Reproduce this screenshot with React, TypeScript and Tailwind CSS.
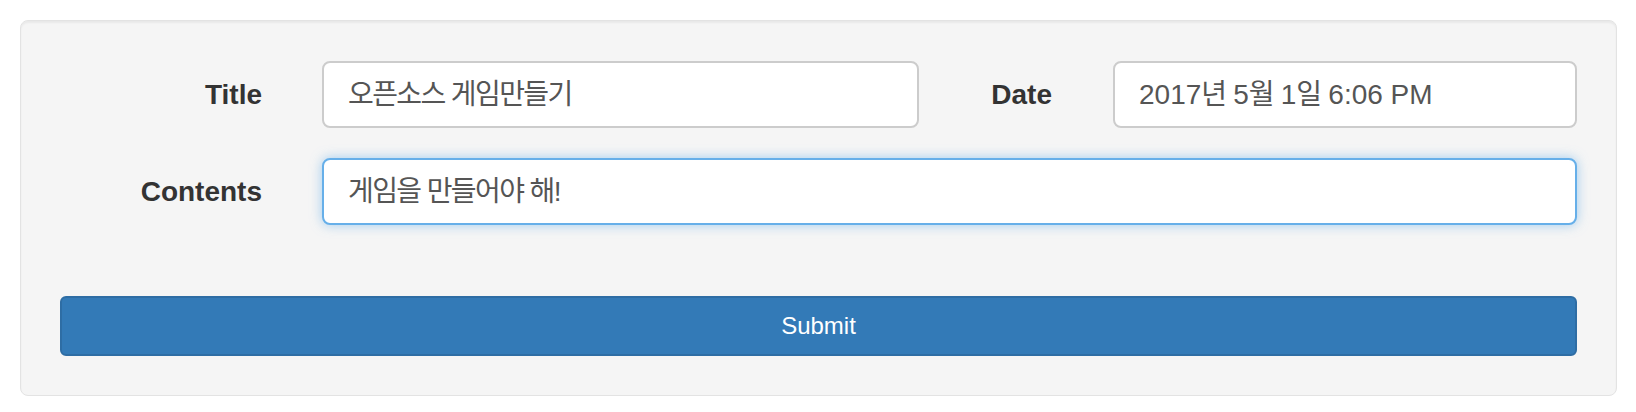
import React from "react";

const font = "font-['Liberation_Sans','Noto_Sans_CJK_KR',sans-serif]";

function K({ children }: { children: React.ReactNode }) {
  return <span className="tracking-[-1.6px]">{children}</span>;
}

export default function App() {
  return (
    <div className={`w-[1636px] h-[412px] bg-white pt-[20px] pl-[20px] ${font}`}>
      <div className="w-[1597px] rounded-[8px] border border-[#e3e3e3] bg-[#f5f5f5] px-[39px] pt-[40px] pb-[39px] shadow-[inset_0_2px_2px_rgba(0,0,0,0.05)]">
        <div className="flex items-center h-[67px]">
          <label className="w-[202px] text-right text-[28px] font-bold text-[#333]">Title</label>
          <div className="ml-[60px] w-[597px] h-[67px] flex items-center rounded-[8px] border-2 border-[#ccc] bg-white px-[24px] text-[28px] text-[#555] whitespace-pre [font-feature-settings:'palt']">
            <K>오픈소스 게임만들기</K>
          </div>
          <label className="w-[133px] text-right text-[28px] font-bold text-[#333]">Date</label>
          <div className="ml-[61px] flex-1 h-[67px] flex items-center rounded-[8px] border-2 border-[#ccc] bg-white px-[24px] text-[28px] text-[#555] whitespace-pre [font-feature-settings:'palt']">
            <span>2017<K>년</K> 5<K>월</K> 1<K>일</K> 6:06 PM</span>
          </div>
        </div>
        <div className="flex items-center h-[67px] mt-[30px]">
          <label className="w-[202px] text-right text-[28px] font-bold text-[#333]">Contents</label>
          <div className="ml-[60px] flex-1 h-[67px] flex items-center rounded-[8px] border-2 border-[#66afe9] bg-white px-[24px] text-[28px] text-[#555] whitespace-pre shadow-[0_0_12px_rgba(102,175,233,0.6)] [font-feature-settings:'palt']">
            <K>게임을 만들어야 해!</K>
          </div>
        </div>
        <button className="mt-[71px] w-full h-[60px] rounded-[6px] border-2 border-[#2e6da4] bg-[#337ab7] text-white text-[24px] flex items-center justify-center">
          Submit
        </button>
      </div>
    </div>
  );
}
